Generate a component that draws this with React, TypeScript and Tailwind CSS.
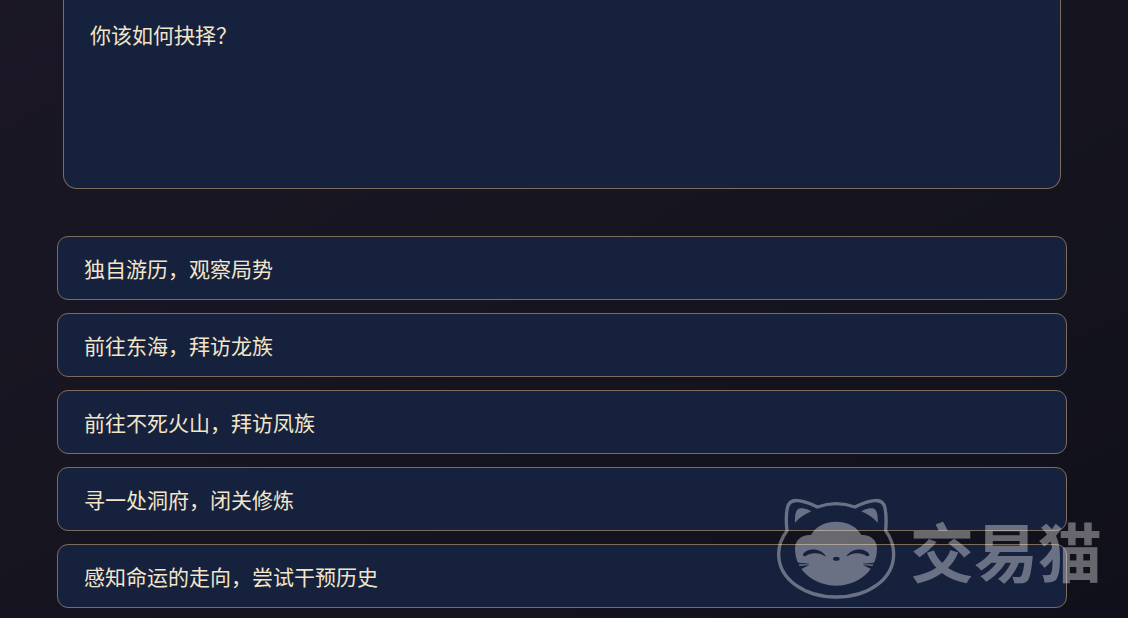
const options = [
  "独自游历，观察局势",
  "前往东海，拜访龙族",
  "前往不死火山，拜访凤族",
  "寻一处洞府，闭关修炼",
  "感知命运的走向，尝试干预历史",
];

function CatLogo() {
  return (
    <svg viewBox="48 52 357 303" className="h-[101px] w-[119px]" fill="none" aria-hidden="true">
      <mask id="face" maskUnits="userSpaceOnUse" x="40" y="40" width="380" height="330">
        <rect x="40" y="40" width="380" height="330" fill="white" />
        <g fill="black">
          <path d="M126 221 C136 202 181 200 195 228 C176 216 153 214 134 226 C129 228 125 225 126 221Z" />
          <path d="M325 221 C315 202 270 200 256 228 C275 216 298 214 317 226 C322 228 326 225 325 221Z" />
          <ellipse cx="226" cy="234" rx="10" ry="6" />
          <path d="M100 245 L145 249 L145 251 L108 251Z M108 257 L145 253 L121 265 L112 264Z" />
          <path d="M351 245 L306 249 L306 251 L343 251Z M343 257 L306 253 L330 265 L339 264Z" />
        </g>
      </mask>
      <path
        d="M78 150 C75 124 75 101 79 82 C83 63 96 58 112 60 C132 62 151 70 169 79 C205 66 246 66 282 79 C300 70 319 62 339 60 C355 58 368 63 372 82 C376 101 376 124 374 150 C389 170 398 193 398 220 C398 297 320 349 226 349 C132 349 53 297 53 220 C53 193 63 170 78 150Z"
        stroke="white"
        strokeWidth="10"
        strokeLinejoin="round"
      />
      <path d="M102 126 C101 108 103 94 109 87 C118 79 136 84 151 92 C132 100 116 111 102 126Z" fill="white" />
      <path d="M350 126 C351 108 349 94 343 87 C334 79 316 84 301 92 C320 100 336 111 350 126Z" fill="white" />
      <path
        d="M150 163 C162 139 191 123 225 123 C260 123 289 139 301 163 C327 161 348 177 348 203 C348 272 290 315 226 315 C161 315 102 272 102 203 C102 177 124 161 150 163Z"
        fill="white"
        mask="url(#face)"
      />
    </svg>
  );
}

export default function App() {
  return (
    <main
      lang="zh-CN"
      className="relative min-h-screen overflow-hidden bg-linear-to-br from-[#1b1726] via-[#16151f] to-[#10101b] pr-[61px] pb-[10px] pl-[57px] font-['Noto_Sans_CJK_SC',sans-serif] text-[21px] leading-8 text-[#f3e6c8]"
    >
      {/* Story panel */}
      <section className="mx-[6px] min-h-[189px] rounded-b-[14px] border border-t-0 border-[#7c6c5b] bg-[#16213e] px-[26px] pt-[18px]">
        <p>你该如何抉择？</p>
      </section>

      {/* Choices */}
      <div className="mt-[47px] flex flex-col gap-[13px]">
        {options.map((option) => (
          <button
            key={option}
            type="button"
            className="h-16 w-full rounded-[11px] border border-[#7c6c5b] bg-[#16213e] px-[26px] text-left"
          >
            {option}
          </button>
        ))}
      </div>

      {/* Watermark */}
      <div className="pointer-events-none absolute right-[26px] bottom-[19px] flex items-center gap-[14px] opacity-[.36]">
        <CatLogo />
        <span className="text-[64px] leading-[80px] font-bold text-white">交易猫</span>
      </div>
    </main>
  );
}
